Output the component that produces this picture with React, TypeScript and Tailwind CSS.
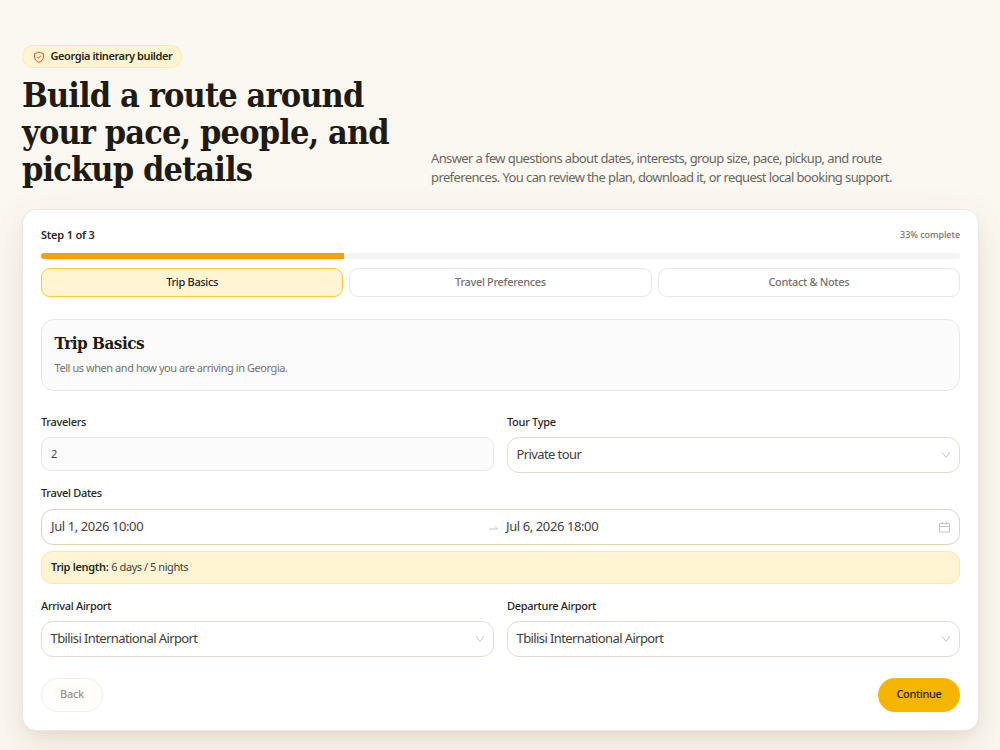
import type { ReactNode } from "react";

const steps = ["Trip Basics", "Travel Preferences", "Contact & Notes"];

function ShieldIcon() {
  return (
    <svg viewBox="0 0 12 12" className="h-3 w-3 shrink-0 text-[#cf5a1c]" fill="none" stroke="currentColor">
      <path d="M6 .9c1.4 1 2.8 1.4 4.4 1.5v3.7c0 2.6-1.7 4.2-4.4 5.2-2.700-1-4.400-2.600-4.400-5.200V2.400C3.200 2.300 4.600 1.900 6 .9Z" strokeLinejoin="round" />
      <path d="m4.100 5.900 1.300 1.300 2.500-2.400" />
    </svg>
  );
}

function ChevronIcon() {
  return (
    <svg viewBox="0 0 10 8" className="h-2 w-[10px] shrink-0 text-[#c4c4c4]" fill="none" stroke="currentColor">
      <path d="M1 1.2 5 6.5 9 1.2" />
    </svg>
  );
}

function CalendarIcon() {
  return (
    <svg viewBox="0 0 11 11" className="mt-px h-[11px] w-[11px] shrink-0 text-[#c4c4c4]" fill="none" stroke="currentColor">
      <path d="M.5 1.5h10v8.500H.5zM.5 4.500h10M3.500 0v2.500M7.500 0v2.500" />
    </svg>
  );
}

function Field({ label, children }: { label: string; children: ReactNode }) {
  return (
    <div>
      <div className="mb-[7px] h-4 text-[11px] font-medium leading-4 tracking-[-0.3px] text-[#292524]">
        {label}
      </div>
      {children}
    </div>
  );
}

function Select({ value }: { value: string }) {
  return (
    <div className="flex h-9 items-center justify-between rounded-[12px] border border-[#e3dbce] bg-white pl-[8.5px] pr-2">
      <span className="pb-px text-[13px] tracking-[-0.6px] text-[#44403c]">{value}</span>
      <ChevronIcon />
    </div>
  );
}

export default function App() {
  return (
    <main className="h-[750px] overflow-hidden bg-[#fbf8f1] pl-[22px] pr-[21px] pt-[45px] font-['Noto_Sans','Open_Sans',sans-serif] text-[#292524]">
      <header className="grid h-[142px] grid-cols-[387px_1fr] items-end gap-[22px]">
        <div className="self-start">
          <div className="flex h-[23px] w-[160px] items-center gap-[6px] rounded-full border border-[#fce9a4] bg-[#fff5d3] pl-[9.5px] text-[11px] font-semibold tracking-[-0.41px] whitespace-nowrap">
            <ShieldIcon />
            Georgia itinerary builder
          </div>
          <h1 className="mt-[9px] font-['DejaVu_Serif_Condensed','DejaVu_Serif',serif] text-[34px] font-bold leading-[36.8px] tracking-[-0.88px] whitespace-nowrap text-[#1f1b14]">
            Build a route around
            <br />
            your pace, people, and
            <br />
            pickup details
          </h1>
        </div>
        <p className="text-[13px] leading-[19px] tracking-[-0.61px] whitespace-nowrap text-[#6b665f]">
          Answer a few questions about dates, interests, group size, pace, pickup, and route
          <br />
          preferences. You can review the plan, download it, or request local booking support.
        </p>
      </header>

      <section className="mt-[22px] h-[522px] rounded-[14px] border border-[#ebe8e4] bg-white px-[18px] pt-[17px] shadow-[0_16px_40px_rgba(120,80,30,0.13),0_6px_12px_-4px_rgba(120,80,30,0.1)]">
        <div className="flex h-4 items-center justify-between">
          <span className="text-[11px] font-semibold tracking-[-0.2px]">Step 1 of 3</span>
          <span className="text-[9px] font-medium tracking-[-0.05px] text-[#78716c]">33% complete</span>
        </div>
        <div className="mt-[10px] h-[6px] overflow-hidden rounded-full bg-[#f5f5f3]">
          <div className="h-full w-[33%] bg-[#f79f0c]" />
        </div>

        <div className="mt-[9px] grid grid-cols-3 gap-[6px]">
          {steps.map((step, i) => (
            <button
              key={step}
              className={
                i === 0
                  ? "h-[29px] rounded-[9px] border border-[#fccb3a] bg-[#fff5d3] text-[11px] font-medium tracking-[-0.33px] text-[#292524]"
                  : "h-[29px] rounded-[9px] border border-[#e9e8e7] bg-white text-[11px] font-medium tracking-[-0.33px] text-[#78716c]"
              }
            >
              {step}
            </button>
          ))}
        </div>

        <div className="mt-[22px] h-[72px] rounded-[13px] border border-[#e9e8e7] bg-[#fbfbfb] px-[12.5px] pt-[11px]">
          <h2 className="font-['DejaVu_Serif_Condensed','DejaVu_Serif',serif] text-[17px] font-bold leading-6 tracking-[-0.5px] text-[#1f1b14]">
            Trip Basics
          </h2>
          <p className="mt-[5px] text-[11px] leading-4 tracking-[-0.44px] text-[#78716c]">
            Tell us when and how you are arriving in Georgia.
          </p>
        </div>

        <div className="mt-[23px] grid grid-cols-2 gap-x-[13px]">
          <Field label="Travelers">
            <div className="flex h-[34px] items-center rounded-[9px] border border-[#e9e8e7] bg-[#fbfbfb] pl-[9px] text-[11px] text-[#44403c]">
              2
            </div>
          </Field>
          <Field label="Tour Type">
            <Select value="Private tour" />
          </Field>
        </div>

        <div className="mt-[12px]">
          <Field label="Travel Dates">
            <div className="mt-[8px] flex h-9 items-center rounded-[12px] border border-[#dfd2c5] bg-white pl-[9px] pr-[9px] text-[13px] tracking-[-0.4px] text-[#44403c]">
              <span className="w-[438px] pb-px">Jul 1, 2026 10:00</span>
              <svg viewBox="0 0 9 5" className="mr-[8px] mt-px h-[5px] w-[9px] text-[#bdbdbd]" fill="none" stroke="currentColor">
                <path d="M0 4h8.400L5.800 1.200" strokeWidth="0.8" />
              </svg>
              <span className="flex-1 pb-px">Jul 6, 2026 18:00</span>
              <CalendarIcon />
            </div>
          </Field>
          <div className="mt-[6px] flex h-[33px] items-center gap-[3px] rounded-[11px] border border-[#fce9a4] bg-[#fff5d3] pl-[9px] text-[11px] tracking-[-0.45px] text-[#44403c]">
            <strong className="font-semibold tracking-[-0.33px] text-[#292524]">Trip length:</strong>
            6 days / 5 nights
          </div>
        </div>

        <div className="mt-[14px] grid grid-cols-2 gap-x-[13px]">
          <Field label="Arrival Airport">
            <Select value="Tbilisi International Airport" />
          </Field>
          <Field label="Departure Airport">
            <Select value="Tbilisi International Airport" />
          </Field>
        </div>

        <div className="mt-[21px] flex justify-between">
          <button className="h-[34px] w-[62px] rounded-full border border-[#f1f0ee] bg-[#fffefb] pb-px text-[11px] font-medium tracking-[-0.3px] text-[#979390]">
            Back
          </button>
          <button className="h-[34px] w-[82px] rounded-full bg-[#f6b500] pb-px text-[11px] font-medium tracking-[-0.35px] text-[#292524]">
            Continue
          </button>
        </div>
      </section>
    </main>
  );
}
